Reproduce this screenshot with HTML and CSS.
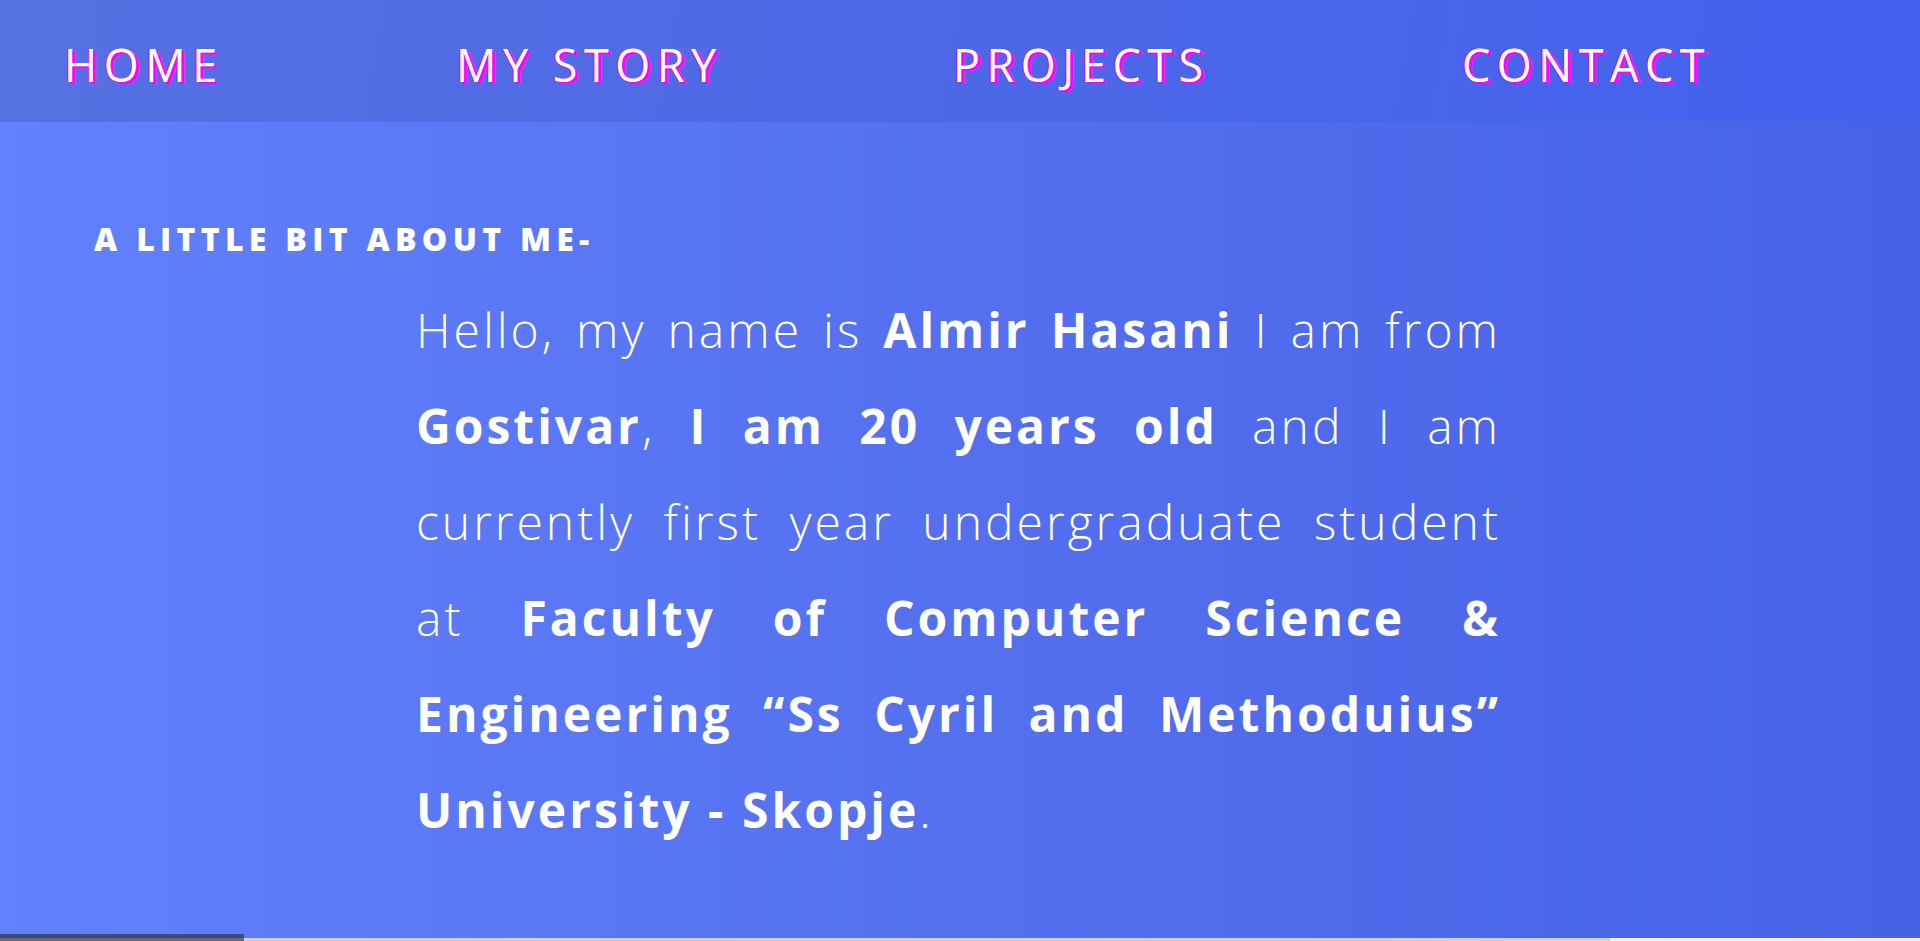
FILE: index.html
```html
<!DOCTYPE html>
<html lang="en">
<head>
<meta charset="utf-8">
<title>About me</title>
<link rel="stylesheet" href="styles.css">
</head>
<body>
<div class="page">
  <nav class="nav">
    <a class="nav-link" href="#">HOME</a>
    <a class="nav-link" href="#">MY STORY</a>
    <a class="nav-link" href="#">PROJECTS</a>
    <a class="nav-link" href="#">CONTACT</a>
  </nav>
  <main class="about">
    <h2 class="about-title">A LITTLE BIT ABOUT ME-</h2>
    <p class="bio">
      <span class="line">Hello, my name is <strong>Almir Hasani</strong> I am from</span>
      <span class="line"><strong>Gostivar</strong>, <strong>I am 20 years old</strong> and I am</span>
      <span class="line">currently first year undergraduate student</span>
      <span class="line">at <strong>Faculty of Computer Science &amp;</strong></span>
      <span class="line"><strong>Engineering “Ss Cyril and Methoduius”</strong></span>
      <span class="line line-last"><strong>University - Skopje</strong>.</span>
    </p>
  </main>
  <div class="scrollbar">
    <div class="scroll-thumb"></div>
    <div class="scroll-track"></div>
  </div>
</div>
</body>
</html>
```
FILE: styles.css
```css
html, body {
  margin: 0;
  height: 100%;
}
body {
  background: linear-gradient(to right, #6281fc 0%, #5470ef 50%, #4762e6 100%);
  color: #fff;
  font-family: "Open Sans", "DejaVu Sans", sans-serif;
  overflow: hidden;
}
.page {
  display: flex;
  flex-direction: column;
  height: 100vh;
}
.nav {
  flex-shrink: 0;
  height: 122px;
  box-sizing: border-box;
  padding: 7px 0 0 64px;
  display: grid;
  grid-template-columns: 392px 497px 509px auto;
  align-items: center;
  background: linear-gradient(100deg, #5671e1 0%, #4d68e6 50%, #4361ef 100%);
}
.nav-link {
  color: #fff;
  text-decoration: none;
  font-size: 45px;
  line-height: 45px;
  font-weight: 400;
  letter-spacing: 6.5px;
  text-shadow: 3px 2px 0 #ff00ff, -1px 0 0 #ff00ff;
}
.about {
  flex: 1;
  padding-top: 101px;
}
.about-title {
  margin: 0 0 0 94px;
  font-size: 32px;
  line-height: 32px;
  font-weight: 800;
  letter-spacing: 5.3px;
}
.bio {
  margin: 27px 0 0 416px;
  width: 1085px;
  font-size: 48px;
  line-height: 96px;
  font-weight: 300;
  letter-spacing: 3px;
}
.bio strong {
  font-weight: 700;
}
.line {
  display: block;
  white-space: nowrap;
  text-align: justify;
  text-align-last: justify;
}
.line-last {
  text-align-last: left;
}
.scrollbar {
  flex-shrink: 0;
  height: 7px;
  display: flex;
}
.scroll-thumb {
  width: 244px;
  background: linear-gradient(to bottom, #3d4a82 0 4px, #6b6b6b 4px 7px);
}
.scroll-track {
  flex: 1;
  background: linear-gradient(to right, #d0d0d0 1366px, #efefef 1366px) left bottom / 100% 3px no-repeat;
}
```
